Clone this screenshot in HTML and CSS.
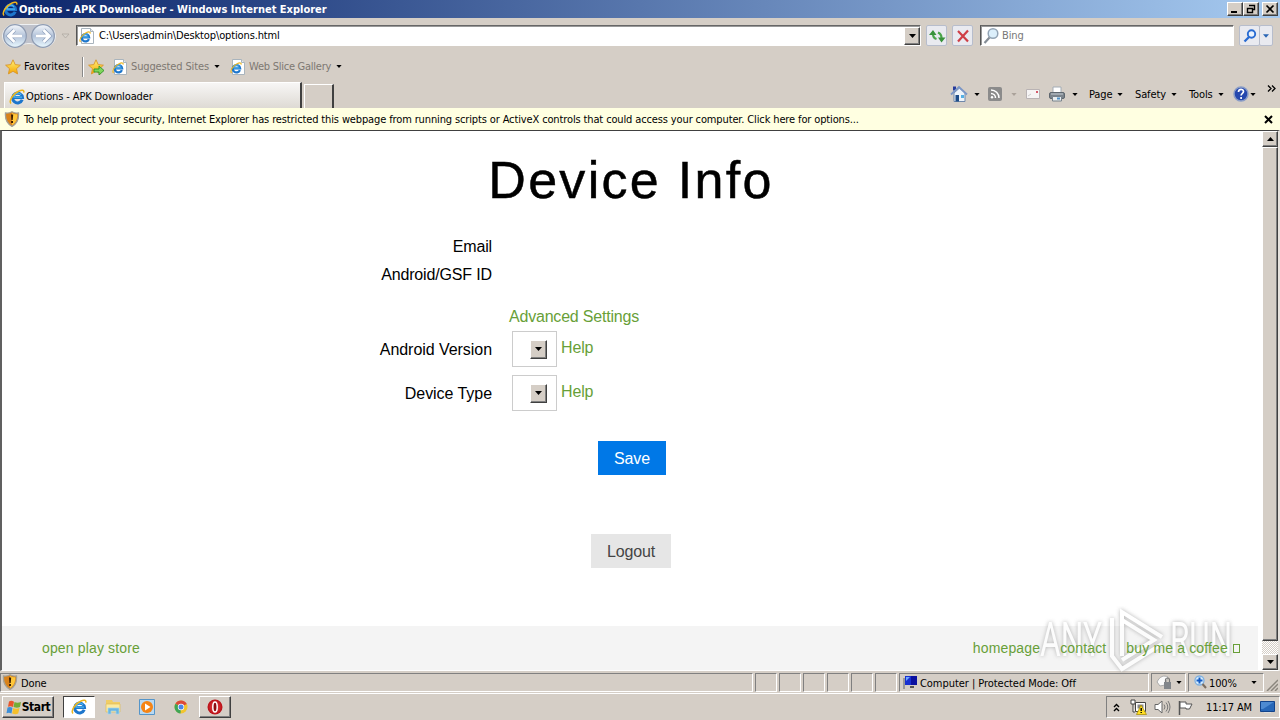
FILE: index.html
```html
<!DOCTYPE html>
<html lang="en">
<head>
    <meta charset="UTF-8">
    <title>Options - APK Downloader</title>
    <link rel="stylesheet" href="styles.css">
</head>
<body>
    <!-- shared icons -->
    <svg class="defs">
        <defs>
            <linearGradient id="gold" x2="0" y2="1"><stop offset="0" stop-color="#fff27a"/><stop offset="1" stop-color="#f5a400"/></linearGradient>
            <linearGradient id="nav" x2="0" y2="1"><stop offset="0" stop-color="#f4f7fb"/><stop offset=".5" stop-color="#b3c3da"/><stop offset="1" stop-color="#eaf9ff"/></linearGradient>
            <radialGradient id="red"><stop offset="0" stop-color="#f05050"/><stop offset="1" stop-color="#b80c14"/></radialGradient>
            <symbol id="ie" viewBox="0 0 16 16">
                <path d="M13.2 10.800A4.900 4.900 0 1 1 13.500 8.600H4" fill="none" stroke="#1d76cc" stroke-width="3"/>
                <path d="M13 8.100H5A3.800 3.800 0 0 1 12 6" fill="none" stroke="#4bb4ee" stroke-width="1.300"/>
                <path d="M2 14.500C-.5 12 4 4.500 10 2c3-1.500 5.500-1 4.700 1.600" fill="none" stroke="#edb51d" stroke-width="1.500"/>
            </symbol>
            <symbol id="iepage" viewBox="0 0 16 16">
                <path d="M2.500.5h9l3 3v12h-12z" fill="#fff" stroke="#a9b4bd"/>
                <path d="M11.500.5v3h3" fill="#e4e9ed" stroke="#a9b4bd"/>
                <use href="#ie" x="0" y="3" width="12" height="12"/>
            </symbol>
            <symbol id="star" viewBox="0 0 16 16">
                <path d="M8 .8l2.200 4.800 5.200.6-3.900 3.500 1.100 5.200L8 12.300l-4.600 2.600 1.100-5.200L.6 6.200l5.200-.6z" fill="url(#gold)" stroke="#d8952a" stroke-width=".9"/>
            </symbol>
            <symbol id="shield" viewBox="0 0 16 16">
                <path d="M8 .8C10 2 12.500 2.300 14.500 2c.5 6-1 10.500-6.500 13.400C2.500 12.500 1 8 1.500 2 3.500 2.300 6 2 8 .8z" fill="#d9821a" stroke="#a3a096" stroke-width="1.300"/>
                <path d="M8 2c1.500 1 3.500 1.400 5.300 1.200C13.300 8 12 11.800 8 14z" fill="#ffc83a"/>
                <path d="M7 3.500h2.200L8.700 9H7.400zM7.100 10h1.900v2H7.100z" fill="#3a1c00"/>
            </symbol>
            <symbol id="down" viewBox="0 0 7 4"><path d="M0 0h7L3.500 4z" fill="currentColor"/></symbol>
        </defs>
    </svg>

    <div class="titlebar">
        <svg class="i16"><use href="#ie"/></svg>
        <span class="caption">Options - APK Downloader - Windows Internet Explorer</span>
        <div class="winbtns">
            <div class="btn"><svg width="12" height="10"><path d="M2 7h6v2H2z"/></svg></div>
            <div class="btn"><svg width="12" height="10"><path d="M4.500 1.500h5v4h-2M4 1.500h6M2.500 4.500h5v4h-5zM2 4.500h6" fill="none" stroke="#000" stroke-width="1.400"/></svg></div>
            <div class="btn close"><svg width="12" height="10"><path d="M2.500 1.500l7 7M9.500 1.500l-7 7" stroke="#000" stroke-width="1.700"/></svg></div>
        </div>
    </div>

    <div class="addressbar">
        <svg class="navs" width="72" height="30" viewBox="0 0 72 30">
            <path d="M14 3.500h30a11.500 11.500 0 0 1 0 23c-5 0-8-4-15-4s-10 4-15 4a11.500 11.500 0 0 1 0-23z" fill="#bfc2cb" stroke="#eef0f2"/>
            <circle cx="15" cy="15" r="11.300" fill="url(#nav)" stroke="#8f9cb2" stroke-width="1.200"/>
            <circle cx="43" cy="15" r="11.300" fill="url(#nav)" stroke="#8f9cb2" stroke-width="1.200"/>
            <path d="M14.500 9l-6 6 6 6M9 15h13M43.500 9l6 6-6 6M49 15H36" fill="none" stroke="#8ea0bd" stroke-width="4.200"/>
            <path d="M14.500 9l-6 6 6 6M9 15h13M43.500 9l6 6-6 6M49 15H36" fill="none" stroke="#fff" stroke-width="2.800"/>
            <path d="M62 13h7l-3.500 4z" fill="#d7d2cb" stroke="#b0aaa2" stroke-width=".8"/>
        </svg>
        <div class="field address">
            <svg class="i16"><use href="#iepage"/></svg>
            <span class="url">C:\Users\admin\Desktop\options.html</span>
            <div class="btn drop"><svg width="7" height="4"><use href="#down"/></svg></div>
        </div>
        <div class="tool refresh">
            <svg width="18" height="16"><path d="M5 6q0 4 3.500 5M13.500 10q0-4-3.500-5.500" fill="none" stroke="#4aa54a" stroke-width="2.200"/><path d="M1 7l4-5 3.500 5zM10 9.500l3.500 5 4-5z" fill="#38923b"/></svg>
        </div>
        <div class="tool stop">
            <svg width="14" height="14"><path d="M2 2l10 10.500M12 1.500L2 12.500" stroke="#cf3e46" stroke-width="2.200"/></svg>
        </div>
        <div class="field search">
            <svg width="16" height="18"><circle cx="10" cy="6.500" r="4.800" fill="#dceffb" stroke="#93a4b5" stroke-width="1.500"/><path d="M6.500 10.500L1.500 16" stroke="#858d96" stroke-width="2.200"/></svg>
            <span class="bing">Bing</span>
        </div>
        <div class="tool go">
            <svg width="14" height="14"><circle cx="8.500" cy="5" r="3.700" fill="#e8f2ff" stroke="#286bd2" stroke-width="1.900"/><path d="M6 8L1.500 12.500" stroke="#286bd2" stroke-width="2.300"/></svg>
        </div>
        <div class="tool godrop"><svg width="6" height="4"><use href="#down"/></svg></div>
    </div>

    <div class="favbar">
        <svg class="i16"><use href="#star"/></svg>
        <span class="favlabel">Favorites</span>
        <div class="sep"></div>
        <svg class="i16 add" viewBox="0 0 16 16"><use href="#star"/><path d="M6 10h5V7l5 4.500-5 4.500v-3H6z" fill="#7fd65c" stroke="#2e9428" stroke-width=".9"/></svg>
        <svg class="i16 sug"><use href="#iepage"/></svg>
        <span class="gray suglabel">Suggested Sites</span>
        <svg class="arr"><use href="#down"/></svg>
        <svg class="i16 web"><use href="#iepage"/></svg>
        <span class="gray weblabel">Web Slice Gallery</span>
        <svg class="arr"><use href="#down"/></svg>
    </div>

    <div class="tabbar">
        <div class="tab">
            <svg class="i16"><use href="#ie"/></svg>
            <span>Options - APK Downloader</span>
        </div>
        <div class="newtab"></div>
        <div class="commands">
            <svg class="i18" viewBox="0 0 18 18"><path d="M4 8v8.500h11V8L9.500 3z" fill="#eef4fa" stroke="#6f87aa"/><path d="M3 1.500h3v4H3z" fill="#263b9c"/><path d="M1 9.500L9 2l8 7.500" fill="none" stroke="#7b96c6" stroke-width="1.800"/><path d="M5.500 10H9v6.500H5.500z" fill="#1e4c88"/><path d="M11 10h3v3h-3z" fill="#55b0e4"/></svg>
            <svg class="arr a1"><use href="#down"/></svg>
            <svg class="feed" width="14" height="14"><rect width="14" height="14" rx="2" fill="#8b8b8b"/><path d="M3 6.500A4.500 4.500 0 0 1 7.500 11M3 3a8 8 0 0 1 8 8" fill="none" stroke="#fff" stroke-width="1.500"/><circle cx="4" cy="10.300" r="1.200" fill="#fff"/></svg>
            <svg class="arr a2"><use href="#down"/></svg>
            <svg class="mail" width="14" height="10"><path d="M.5.5h13v9H.5z" fill="#f6f4f4" stroke="#b9b3b4"/><path d="M10 2h2v2h-2z" fill="#d55a6a"/><path d="M2 7l3-2" stroke="#ccc"/></svg>
            <svg class="print" width="16" height="16"><path d="M4 1h8v6H4z" fill="#fff" stroke="#a3acb5"/><rect x=".5" y="6.500" width="15" height="6" rx="1.500" fill="#7b838b" stroke="#5e666e"/><path d="M2 8h12" stroke="#c8ced4"/><path d="M3.500 10.500h9v4.500h-9z" fill="#e8edf0" stroke="#78828b"/><path d="M8 11.500h3v2H8z" fill="#4f8fc4"/></svg>
            <svg class="arr a3"><use href="#down"/></svg>
            <span class="page">Page</span><svg class="arr"><use href="#down"/></svg>
            <span class="safety">Safety</span><svg class="arr"><use href="#down"/></svg>
            <span class="tools">Tools</span><svg class="arr"><use href="#down"/></svg>
            <svg class="help" width="16" height="16"><circle cx="8" cy="8" r="7" fill="#2548ae" stroke="#8a9dc7" stroke-width="1.500"/><path d="M5.500 6c0-3.500 5-3.300 5-.4 0 1.800-2.400 1.700-2.400 4M8.100 11v2" fill="none" stroke="#fff" stroke-width="1.700"/></svg>
            <svg class="arr a4"><use href="#down"/></svg>
            <svg class="more" width="9" height="7"><path d="M1 .5l3 3-3 3M5 .5l3 3-3 3" fill="none" stroke="#000" stroke-width="1.300"/></svg>
        </div>
    </div>

    <div class="infobar">
        <svg class="i16"><use href="#shield"/></svg>
        <span>To help protect your security, Internet Explorer has restricted this webpage from running scripts or ActiveX controls that could access your computer. Click here for options...</span>
        <svg class="x" width="9" height="9"><path d="M1 1l7 7M8 1L1 8" stroke="#000" stroke-width="2"/></svg>
    </div>

    <div class="view">
        <div class="content">
            <h1>Device Info</h1>
            <div class="form">
                <label>Email</label><div></div>
                <label>Android/GSF ID</label><div></div>
                <div></div><a class="adv">Advanced Settings</a>
                <label class="wide">Android Version</label>
                <div class="control"><div class="select"><div class="btn"><svg width="7" height="4"><use href="#down"/></svg></div></div><a>Help</a></div>
                <label class="wide">Device Type</label>
                <div class="control"><div class="select"><div class="btn"><svg width="7" height="4"><use href="#down"/></svg></div></div><a>Help</a></div>
            </div>
            <div class="button save">Save</div>
            <div class="button logout">Logout</div>
            <svg class="watermark" width="204" height="72" viewBox="0 0 204 72">
                <g class="wm">
                    <text x="6" y="50" textLength="62" lengthAdjust="spacingAndGlyphs">ANY</text>
                    <text x="136" y="50" textLength="62" lengthAdjust="spacingAndGlyphs">RUN</text>
                    <path d="M88 50V6L128 31M88 14L120 34 88 54M78 12v38l10 13 40-25"/>
                </g>
            </svg>
            <div class="footer">
                <a>open play store</a>
                <a class="home">homepage</a>
                <a class="contact">contact</a>
                <a class="coffee">buy me a coffee <i></i></a>
            </div>
        </div>
        <div class="scroll">
            <div class="btn"><svg class="up" width="7" height="4"><use href="#down"/></svg></div>
            <div class="btn thumb"></div>
            <div class="track"></div>
            <div class="btn"><svg width="7" height="4"><use href="#down"/></svg></div>
        </div>
    </div>

    <div class="status">
        <div class="pane done"><svg class="i16"><use href="#shield"/></svg><span>Done</span></div>
        <div class="pane s"></div><div class="pane s"></div><div class="pane s"></div>
        <div class="pane s"></div><div class="pane s"></div><div class="pane s"></div>
        <div class="pane zone">
            <svg class="i16" viewBox="0 0 16 16"><path d="M1 4h2v11H1z" fill="#999"/><path d="M3 2h12v9H3z" fill="#1830d0"/><path d="M9 2h6v9H9z" fill="#0a10a0"/><path d="M4 3l4 0-4 4z" fill="#6fa8ff"/><path d="M8 12h4v2H8z" fill="#555"/></svg>
            <span>Computer | Protected Mode: Off</span>
        </div>
        <div class="pane lock">
            <svg class="i16" viewBox="0 0 16 16"><path d="M1 8c3-6 7-7 11-5l-3 8-5 1z" fill="#fafafa" stroke="#aaa"/><path d="M8 8h7v7H8z" fill="#81858a"/><path d="M9.500 8V6a2 2 0 0 1 4 0v2" fill="none" stroke="#777" stroke-width="1.200"/></svg>
            <svg class="arr"><use href="#down"/></svg>
        </div>
        <div class="pane zoom">
            <svg width="13" height="14"><circle cx="5.500" cy="5.500" r="4.500" fill="#d6ecfc" stroke="#7fb0e0" stroke-width="1.300"/><path d="M2.500 5.500h6M5.500 2.500v6" stroke="#145bc4" stroke-width="2"/><path d="M8.500 9l3.500 4" stroke="#7c6e60" stroke-width="2"/></svg>
            <span>100%</span>
            <svg class="arr"><use href="#down"/></svg>
        </div>
        <svg class="grip" width="12" height="12"><path d="M1 12L12 1M5 12l7-7M9 12l3-3" stroke="#8b867e" stroke-width="1.500"/></svg>
    </div>

    <div class="taskbar">
        <div class="btn start">
            <svg width="16" height="15"><path d="M3 1.500c2-1.300 3-1 5 .2L7 7C5 6 4 6 2 6.800z" fill="#e8562b"/><path d="M8.500 2c2 1 4 .8 6.500 0L14 7C12 8 10 8 7.500 7z" fill="#74ad35"/><path d="M1.500 7.500c2-.9 3-.8 5 .2L5.500 13.500c-2-1-3-1.100-5-.3z" fill="#3c8fd8"/><path d="M7.200 8c2 1 4 .9 6.300 0l-1.300 5.500c-2 1-3.500.9-6 0z" fill="#f5c02b"/></svg>
            <span>Start</span>
        </div>
        <div class="task active"><svg class="i16"><use href="#ie"/></svg></div>
        <svg class="folder" width="17" height="16"><path d="M1 3V1h6l1 2h7v4H1z" fill="#f0cd65"/><path d="M1 5h14v8H1z" fill="#fbeaa0" stroke="#dfbb58" stroke-width=".7"/><path d="M3 15V9h11v6h-3v-3H6v3z" fill="#6bb5e0" stroke="#a6d6ee" stroke-width=".7"/></svg>
        <svg class="media" width="16" height="16"><path d="M.5.5h15v15H.5z" fill="#b9d9f2" stroke="#5595c9"/><circle cx="8" cy="8" r="6" fill="#f58415"/><path d="M6 4.500L11.500 8 6 11.500z" fill="#fff"/></svg>
        <svg class="chrome" width="14" height="14" viewBox="0 0 14 14"><circle cx="7" cy="7" r="6.500" fill="#f2c52e"/><path d="M7 7L1.400 3.700A6.500 6.500 0 0 1 12.800 4z" fill="#dc4a3a"/><path d="M7 7L1.400 3.700A6.500 6.500 0 0 0 6.500 13.500z" fill="#3fa556"/><circle cx="7" cy="7" r="3.200" fill="#fff"/><circle cx="7" cy="7" r="2.500" fill="#4b86e8"/></svg>
        <div class="btn task opera"><svg class="i16" viewBox="0 0 16 16"><circle cx="8" cy="8" r="7.500" fill="url(#red)"/><ellipse cx="8" cy="8" rx="2.200" ry="5" fill="#8e0c10" stroke="#fff" stroke-width="1.500"/></svg></div>
        <div class="tray">
            <svg class="chev" width="7" height="9"><path d="M1 4L3.500 1.500 6 4M1 8L3.500 5.500 6 8" fill="none" stroke="#000" stroke-width="1.400"/></svg>
            <svg class="net" width="17" height="16"><path d="M1 1h4v4H1zM3 5v8h2" fill="#fff" stroke="#444"/><path d="M5.500 3.500h10v9h-10z" fill="#fff" stroke="#444"/><path d="M7.500 5.500h6v4h-6z" fill="#888"/><path d="M11 6l5.500 9.500h-10z" fill="#ffde22" stroke="#a48700" stroke-width=".7"/><path d="M10.500 9h1.400v3h-1.400zM10.500 13h1.400v1h-1.400z"/></svg>
            <svg class="vol" width="17" height="14"><path d="M1 4.500h3L8 1v12L4 9.500H1z" fill="#fff" stroke="#666"/><path d="M10 4.500q2 2.500 0 5M12 2.500q3.500 4.500 0 9M14 1q4 6 0 12" fill="none" stroke="#777"/></svg>
            <svg class="flag" width="17" height="15"><path d="M1.500 1v14" stroke="#555" stroke-width="1.500"/><path d="M2 2h6v2h6l-2.500 5H8V8H2z" fill="#fff" stroke="#555"/></svg>
            <span>11:17 AM</span>
            <svg class="desk" width="15" height="13"><path d="M.5.5h14v10H.5z" fill="#2767b8" stroke="#12438b"/><path d="M1 1h13L3 8H1z" fill="#4d8ad2"/><path d="M4 11.500h7" stroke="#ddd"/></svg>
        </div>
    </div>
</body>
</html>
```
FILE: styles.css
```css
* {
    box-sizing: border-box;
}
body {
    margin: 0;
    width: 1280px;
    height: 720px;
    overflow: hidden;
    background: #d5cec6;
    color: #000;
    font: 11px/14px "DejaVu Sans Condensed", "DejaVu Sans", sans-serif;
    letter-spacing: -0.13px;
    white-space: nowrap;
}
svg {
    display: block;
    flex: none;
}
.defs {
    width: 0;
    height: 0;
    position: absolute;
}
.i16 {
    width: 16px;
    height: 16px;
}
.i18 {
    width: 18px;
    height: 18px;
}
.arr {
    width: 6px;
    height: 3px;
}
.btn {
    display: flex;
    align-items: center;
    justify-content: center;
    background: #d5cec6;
    border: 1px solid;
    border-color: #fff #404040 #404040 #fff;
    box-shadow: inset -1px -1px #808080;
}

/* title bar */
.titlebar {
    height: 18px;
    display: flex;
    align-items: center;
    padding: 0 2px;
    background: linear-gradient(90deg, #0a246a, #a6caf0);
}
.caption {
    color: #fff;
    font-weight: bold;
    margin-left: 1px;
    padding-top: 2px;
    letter-spacing: 0;
}
.winbtns {
    display: flex;
    margin-left: auto;
}
.winbtns .btn {
    width: 16px;
    height: 14px;
}
.winbtns .close {
    margin-left: 3px;
}

/* address bar */
.addressbar {
    height: 35px;
    display: flex;
    align-items: center;
}
.field {
    height: 21px;
    display: flex;
    align-items: center;
    background: #fff;
    border: 1px solid;
    border-color: #666 #fff #fff #555;
    box-shadow: inset 1px 1px #999;
}
.address {
    width: 845px;
    margin-left: 4px;
    padding-left: 2px;
}
.url {
    margin-left: 4px;
    padding-top: 1px;
}
.drop {
    width: 16px;
    height: 18px;
    margin-left: auto;
}
.tool {
    width: 21px;
    height: 21px;
    display: flex;
    align-items: center;
    justify-content: center;
    background: #e9eaf0;
    border: 1px solid #b7bdcc;
    border-radius: 2px;
}
.refresh,
.stop {
    margin-left: 5px;
}
.search {
    width: 254px;
    margin-left: 7px;
    padding-left: 2px;
    color: #777;
}
.bing {
    margin-left: 3px;
    padding-top: 1px;
}
.go {
    margin-left: 5px;
}
.godrop {
    width: 14px;
    margin-left: -1px;
    color: #2965b5;
}

/* favorites */
.favbar {
    height: 27px;
    display: flex;
    align-items: center;
    padding-left: 5px;
}
.favlabel {
    width: 46px;
    margin-left: 3px;
    letter-spacing: 0.1px;
}
.sep {
    height: 20px;
    margin-left: 12px;
    border-left: 1px solid #888;
    border-right: 1px solid #fff;
}
.add {
    margin-left: 4px;
}
.sug {
    margin-left: 8px;
}
.gray {
    color: #7d7872;
    padding-top: 1px;
}
.suglabel {
    width: 78px;
    margin: 0 5px 0 3px;
}
.web {
    margin-left: 10px;
}
.weblabel {
    width: 82px;
    margin: 0 5px 0 3px;
    letter-spacing: -0.25px;
}

/* tabs and command bar */
.tabbar {
    height: 28px;
    display: flex;
    align-items: flex-end;
    padding-left: 4px;
}
.tab {
    width: 298px;
    height: 26px;
    display: flex;
    align-items: center;
    padding: 2px 0 0 4px;
    background: linear-gradient(#f7f6f5, #dedad4);
    border-top: 1px solid #fff;
    border-left: 1px solid #fff;
    border-right: 2px solid #404040;
}
.tab span {
    margin-left: 1px;
}
.newtab {
    width: 30px;
    height: 24px;
    margin-left: 2px;
    border-top: 1px solid #fff;
    border-left: 1px solid #fff;
    border-right: 2px solid #404040;
}
.commands {
    height: 28px;
    display: flex;
    align-items: center;
    margin-left: 616px;
}
.commands span {
    padding-top: 1px;
}
.a1 {
    margin-left: 6px;
}
.feed {
    margin-left: 8px;
}
.a2 {
    margin-left: 9px;
    color: #aaa29a;
}
.mail {
    margin-left: 9px;
}
.print {
    margin-left: 9px;
}
.a3 {
    margin-left: 7px;
}
.page {
    width: 25px;
    margin: 0 3px 0 11px;
}
.safety {
    width: 32px;
    margin: 0 4px 0 12px;
}
.tools {
    width: 26px;
    margin: 0 3px 0 12px;
}
.help {
    margin-left: 9px;
}
.a4 {
    margin-left: 1px;
}
.more {
    margin: -12px 0 0 11px;
}

.infobar {
    height: 22px;
    display: flex;
    align-items: center;
    padding: 0 7px 0 4px;
    background: #ffffe1;
}
.infobar span {
    margin-left: 4px;
    padding-top: 1px;
}
.x {
    margin-left: auto;
}

/* web page */
.view {
    height: 541px;
    display: flex;
    border: 1px solid #808080;
    border-top-color: #404040;
    border-left: 2px solid #606060;
    border-right: 2px solid #e6e2dd;
    border-bottom-color: #fff;
}
.content {
    width: 1260px;
    position: relative;
    display: flex;
    flex-direction: column;
    background: #fff;
    font: 16px/20px "Liberation Sans", Arial, sans-serif;
    letter-spacing: -0.15px;
}
h1 {
    width: 1258px;
    height: 60px;
    margin: 19px 0 23px;
    font-size: 52px;
    line-height: 60px;
    font-weight: normal;
    letter-spacing: 2.3px;
    text-align: center;
    -webkit-text-stroke: 0.5px #000;
}
.content a {
    color: #689f38;
}
.form {
    display: grid;
    grid-template-columns: 490px 1fr;
    grid-template-rows: 28px 28px 38px 44px 44px;
    column-gap: 17px;
    align-items: center;
}
.form label {
    text-align: right;
}
.form .wide {
    letter-spacing: -0.05px;
    padding-top: 2px;
}
.adv {
    align-self: end;
    letter-spacing: -0.2px;
}
.control {
    display: flex;
    padding-left: 3px;
}
.control a {
    margin: 7px 0 0 4px;
}
.select {
    width: 45px;
    height: 36px;
    display: flex;
    align-items: center;
    justify-content: flex-end;
    padding-right: 9px;
    border: 1px solid #ccc;
}
.select .btn {
    width: 17px;
    height: 19px;
}
.button {
    height: 34px;
    line-height: 36px;
    text-align: center;
    align-self: center;
}
.save {
    width: 68px;
    margin: 26px 0 59px;
    background: #0078e7;
    color: #fff;
}
.logout {
    width: 80px;
    margin-right: 2px;
    background: #e6e6e6;
    color: #444;
}
.footer {
    height: 44px;
    width: 1256px;
    display: flex;
    align-items: center;
    margin-top: auto;
    padding: 0 18px 0 40px;
    background: #f4f4f4;
    font-size: 14px;
    letter-spacing: 0.15px;
}
.footer a {
    position: relative;
    z-index: 2;
}
.home {
    margin-left: auto;
}
.contact,
.coffee {
    margin-left: 20px;
}
.coffee i {
    display: inline-block;
    width: 7px;
    height: 9px;
    margin-left: 1px;
    border: 1px solid #689f38;
}
.watermark {
    position: absolute;
    z-index: 1;
    left: 1032px;
    top: 475px;
    opacity: 0.75;
}
.wm {
    fill: #fff;
    filter: drop-shadow(0 0 2px #999);
    font: 48px "Roboto", sans-serif;
    letter-spacing: 0;
}
.wm path {
    fill: none;
    stroke: #fff;
    stroke-width: 4;
}
.scroll {
    width: 16px;
    display: flex;
    flex-direction: column;
}
.scroll .btn {
    height: 16px;
}
.scroll .thumb {
    height: 494px;
}
.up {
    transform: rotate(180deg);
}
.track {
    flex: 1;
    background: repeating-conic-gradient(#fff 0 25%, #d5cec6 0 50%) 0 0 / 2px 2px;
}

/* status bar */
.status {
    height: 23px;
    display: flex;
    align-items: center;
    gap: 2px;
    border-bottom: 1px solid #fff;
}
.pane {
    height: 19px;
    display: flex;
    align-items: center;
    border: 1px solid;
    border-color: #808080 #fff #fff #808080;
}
.pane span {
    padding-top: 3px;
}
.done {
    width: 753px;
    padding-left: 1px;
}
.done span {
    margin-left: 3px;
}
.s {
    width: 22px;
}
.zone {
    width: 250px;
    padding-left: 2px;
}
.zone span {
    margin-left: 2px;
    letter-spacing: -0.05px;
}
.lock {
    width: 35px;
    padding-left: 4px;
}
.lock .arr {
    margin-left: 4px;
}
.zoom {
    width: 76px;
    padding-left: 5px;
}
.zoom span {
    margin-left: 2px;
}
.zoom .arr {
    margin-left: auto;
    margin-right: 6px;
}
.grip {
    margin-top: 6px;
}

/* taskbar */
.taskbar {
    height: 26px;
    display: flex;
    align-items: center;
    padding-left: 2px;
}
.start {
    width: 52px;
    height: 22px;
    font-weight: bold;
    font-size: 12px;
    letter-spacing: -0.4px;
}
.task {
    width: 32px;
    height: 22px;
}
.active {
    display: flex;
    align-items: center;
    justify-content: center;
    margin-left: 9px;
    background: #fff;
    border: 1px solid #404040;
    border-right-color: #fff;
    border-bottom-color: #fff;
}
.folder {
    margin-left: 10px;
}
.media {
    margin-left: 17px;
}
.chrome {
    margin-left: 19px;
}
.opera {
    margin-left: 11px;
}
.tray {
    width: 174px;
    height: 22px;
    display: flex;
    align-items: center;
    margin-left: auto;
    padding-left: 6px;
    border: 1px solid;
    border-color: #808080 #fff #fff #808080;
}
.net {
    margin-left: 10px;
}
.vol,
.flag {
    margin-left: 7px;
}
.tray span {
    width: 46px;
    margin-left: 11px;
    padding-top: 1px;
}
.desk {
    margin-left: 8px;
}
```
